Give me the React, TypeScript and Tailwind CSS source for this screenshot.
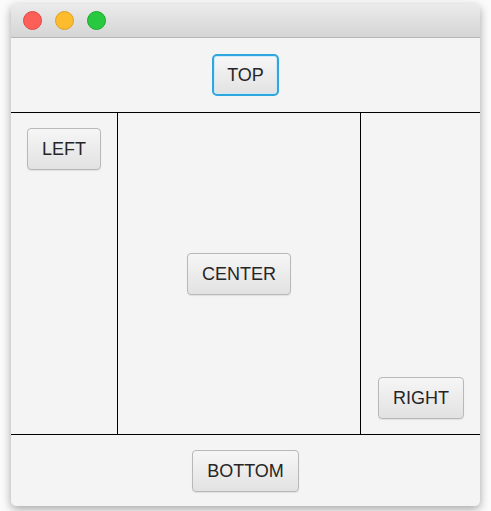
import React from "react";

function Btn({ label, focused = false }: { label: string; focused?: boolean }) {
  return (
    <div
      className={
        focused
          ? "h-[42px] px-[13px] flex items-center justify-center rounded-[5px] border-2 border-[#2ea6de] bg-gradient-to-b from-[#f7f7f7] to-[#e2e2e2] shadow-[inset_0_0_0_1px_#cfe9f6] text-[18px] leading-none text-[#262626]"
          : "h-[42px] px-[14px] flex items-center justify-center rounded-[4px] border border-[#b8b8b8] bg-gradient-to-b from-[#f6f6f6] to-[#e2e2e2] shadow-[0_1px_1px_rgba(0,0,0,0.08)] text-[18px] leading-none text-[#262626]"
      }
      style={{ fontFamily: '"Liberation Sans", Arial, sans-serif' }}
    >
      {label}
    </div>
  );
}

export default function App() {
  return (
    <div className="w-[491px] h-[511px] bg-[#fbfbfb] pl-[11px] pt-[4px] overflow-hidden">
      <div className="w-[469px] h-[502px] rounded-[5px] bg-[#f4f4f4] shadow-[0_3px_10px_rgba(0,0,0,0.35)] flex flex-col overflow-hidden">
        {/* title bar */}
        <div className="h-[34px] shrink-0 bg-gradient-to-b from-[#ebebeb] to-[#d5d5d5] border-b border-[#b6b6b6] flex items-center pl-[12px] gap-[13px]">
          <div className="w-[19px] h-[19px] rounded-full bg-[#fc5f57] border border-[#e2463f]" />
          <div className="w-[19px] h-[19px] rounded-full bg-[#fdbc2e] border border-[#dea123]" />
          <div className="w-[19px] h-[19px] rounded-full bg-[#28c840] border border-[#1aab29]" />
        </div>
        {/* top */}
        <div className="h-[74px] shrink-0 flex items-center justify-center">
          <Btn label="TOP" focused />
        </div>
        <div className="h-px shrink-0 bg-black" />
        {/* middle */}
        <div className="h-[321px] shrink-0 flex">
          <div className="w-[106px] shrink-0 pt-[15px] pl-[16px] flex items-start">
            <Btn label="LEFT" />
          </div>
          <div className="w-px shrink-0 bg-black" />
          <div className="flex-1 flex items-center justify-center">
            <Btn label="CENTER" />
          </div>
          <div className="w-px shrink-0 bg-black" />
          <div className="w-[119px] shrink-0 flex items-end justify-end pb-[15px] pr-[16px]">
            <Btn label="RIGHT" />
          </div>
        </div>
        <div className="h-px shrink-0 bg-black" />
        {/* bottom */}
        <div className="flex-1 flex items-center justify-center">
          <Btn label="BOTTOM" />
        </div>
      </div>
    </div>
  );
}
